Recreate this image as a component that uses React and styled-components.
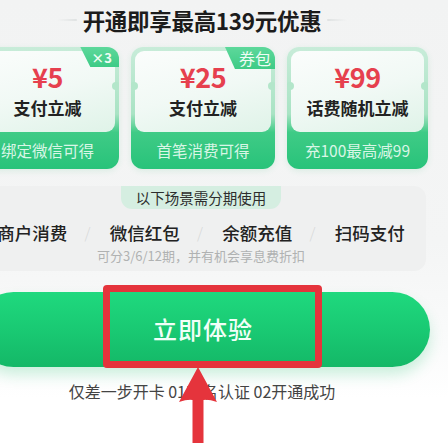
import React from "react";
import styled, { createGlobalStyle } from "styled-components";

const GlobalStyle = createGlobalStyle`
  html, body {
    margin: 0;
    padding: 0;
    background: #fff;
  }
  body {
    font-family: "Noto Sans CJK SC", "Noto Sans", "Liberation Sans", sans-serif;
  }
`;

const Screen = styled.div`
  position: relative;
  width: 448px;
  height: 443px;
  overflow: hidden;
  background: linear-gradient(180deg, #f2f3f3 0%, #f4f5f5 55%, #fafbfb 78%, #ffffff 90%);
`;

// content is wider than the viewport and shifted left, like the cropped screenshot
const Content = styled.div`
  width: 452px;
  margin-left: -24px;
  display: flex;
  flex-direction: column;
  align-items: stretch;
`;

const TitleRow = styled.div`
  height: 40px;
  display: flex;
  align-items: center;
  justify-content: center;
  gap: 6px;
`;

const TitleLine = styled.span`
  width: 20px;
  height: 2px;
  border-radius: 1px;
  background: linear-gradient(
    ${(p) => (p.$right ? "90deg" : "270deg")},
    #dfe2e2,
    rgba(223, 226, 226, 0)
  );
`;

const Title = styled.h1`
  margin: 0;
  font-size: 22.5px;
  line-height: 30px;
  font-weight: 700;
  color: #1c1c1c;
  letter-spacing: -0.3px;
`;

const Cards = styled.div`
  margin-top: 7px;
  display: grid;
  grid-template-columns: 143px 144px 141px;
  justify-content: space-between;
`;

const Card = styled.div`
  position: relative;
  height: 122px;
  border-radius: 12px;
  overflow: hidden;
  display: flex;
  flex-direction: column;
  background: linear-gradient(180deg, #c8ecd9 0%, #a9e3c4 55%, #3fcb86 70%, #28c37a 100%);
  box-shadow: 0 2px 6px rgba(40, 180, 110, 0.12);
`;

const Inner = styled.div`
  position: relative;
  margin: 4px 4px 0;
  height: 81px;
  border-radius: 9px;
  background: linear-gradient(165deg, #fbfdfc 0%, #f1f9f5 50%, #dff3e8 100%);
  display: flex;
  flex-direction: column;
  align-items: center;
  padding-top: 11px;
  box-sizing: border-box;

  &::before,
  &::after {
    content: "";
    position: absolute;
    top: 31px;
    width: 8px;
    height: 8px;
    border-radius: 50%;
    background: #b3e6ca;
  }
  &::before {
    left: -5px;
  }
  &::after {
    right: -5px;
  }
`;

const Amount = styled.div`
  font-size: 27px;
  line-height: 30px;
  font-weight: 700;
  color: #e6404e;
  letter-spacing: -0.5px;
`;

const Label = styled.div`
  margin-top: 5px;
  font-size: 17px;
  line-height: 22px;
  font-weight: 700;
  color: #222;
`;

const Footer = styled.div`
  flex: 1;
  display: flex;
  align-items: center;
  justify-content: center;
  font-size: 15.5px;
  color: #d9f6e6;
  padding-bottom: 1px;
`;

const Tag = styled.div`
  position: absolute;
  top: 0;
  right: 0;
  height: ${(p) => (p.$wide ? "22px" : "20px")};
  padding: 0 ${(p) => (p.$wide ? "4px" : "7px")} 0 ${(p) => (p.$wide ? "14px" : "11px")};
  display: flex;
  align-items: center;
  font-size: ${(p) => (p.$wide ? "16px" : "13px")};
  font-weight: ${(p) => (p.$wide ? 400 : 700)};
  color: #effcf4;
  background: linear-gradient(180deg, #5dd89b, #3ecb86);
  clip-path: polygon(0 0, 100% 0, 100% 100%, 10px 100%);
  border-bottom-left-radius: 6px;
`;

const Panel = styled.div`
  margin-top: 17px;
  margin-right: 2px;
  height: 85px;
  border-radius: 12px;
  background: #eff0f0;
  display: flex;
  flex-direction: column;
  align-items: center;
  box-sizing: border-box;
`;

const Pill = styled.div`
  height: 23px;
  padding: 0 15px;
  border-radius: 0 0 11px 11px;
  background: #d5eee1;
  display: flex;
  align-items: center;
  font-size: 14.5px;
  color: #2d2d2d;
`;

const Scenes = styled.div`
  margin-top: 12px;
  width: 100%;
  display: grid;
  grid-template-columns: repeat(4, 1fr);
`;

const Scene = styled.div`
  position: relative;
  text-align: center;
  font-size: 17.5px;
  line-height: 24px;
  font-weight: 500;
  color: #222;

  & + &::before {
    content: "/";
    position: absolute;
    left: -4px;
    top: 0;
    font-size: 15px;
    font-weight: 300;
    color: #d6d8d8;
  }
`;

const Note = styled.div`
  margin-top: 2px;
  font-size: 13px;
  line-height: 18px;
  color: #b0b2b2;
`;

const ButtonArea = styled.div`
  position: relative;
  margin-top: 21px;
  margin-right: -2px;
`;

const CTA = styled.button`
  width: 100%;
  height: 75px;
  border: none;
  border-radius: 38px;
  background: linear-gradient(180deg, #1fd97e 0%, #19c872 55%, #14b867 100%);
  box-shadow: 0 8px 14px rgba(30, 190, 110, 0.22);
  color: #f2fff8;
  font-family: inherit;
  font-size: 24px;
  font-weight: 500;
  letter-spacing: 1px;
  display: flex;
  align-items: center;
  justify-content: center;
  padding: 0 0 3px;
`;

// red annotation frame drawn over the button
const Highlight = styled.div`
  position: absolute;
  left: 127px;
  top: -7px;
  width: 219px;
  height: 83px;
  box-sizing: border-box;
  border: 7px solid #e5343c;
  border-radius: 4px;
  pointer-events: none;
`;

const Steps = styled.div`
  margin-top: 15px;
  text-align: center;
  font-size: 16px;
  line-height: 18px;
  color: #444;
`;

const Arrow = styled.svg`
  position: absolute;
  left: 177px;
  top: 366px;
`;

const cards = [
  { amount: "¥5", label: "支付立减", footer: "绑定微信可得", tag: "×3" },
  { amount: "¥25", label: "支付立减", footer: "首笔消费可得", tag: "券包", wide: true },
  { amount: "¥99", label: "话费随机立减", footer: "充100最高减99" },
];

const scenes = ["商户消费", "微信红包", "余额充值", "扫码支付"];

export default function App() {
  return (
    <Screen>
      <GlobalStyle />
      <Content>
        <TitleRow>
          <TitleLine />
          <Title>开通即享最高139元优惠</Title>
          <TitleLine $right />
        </TitleRow>

        <Cards>
          {cards.map((c, i) => (
            <Card key={i}>
              <Inner>
                <Amount>{c.amount}</Amount>
                <Label>{c.label}</Label>
              </Inner>
              <Footer>{c.footer}</Footer>
              {c.tag && <Tag $wide={c.wide}>{c.tag}</Tag>}
            </Card>
          ))}
        </Cards>

        <Panel>
          <Pill>以下场景需分期使用</Pill>
          <Scenes>
            {scenes.map((s) => (
              <Scene key={s}>{s}</Scene>
            ))}
          </Scenes>
          <Note>可分3/6/12期，并有机会享息费折扣</Note>
        </Panel>

        <ButtonArea>
          <CTA>立即体验</CTA>
          <Highlight />
        </ButtonArea>

        <Steps>仅差一步开卡 01实名认证 02开通成功</Steps>
      </Content>

      <Arrow width="42" height="80" viewBox="0 0 42 80">
        <path
          d="M21 1 L40 36 Q31 33 26.5 34 L26.5 80 L15.5 80 L15.5 34 Q11 33 2 36 Z"
          fill="#e5343c"
        />
      </Arrow>
    </Screen>
  );
}
